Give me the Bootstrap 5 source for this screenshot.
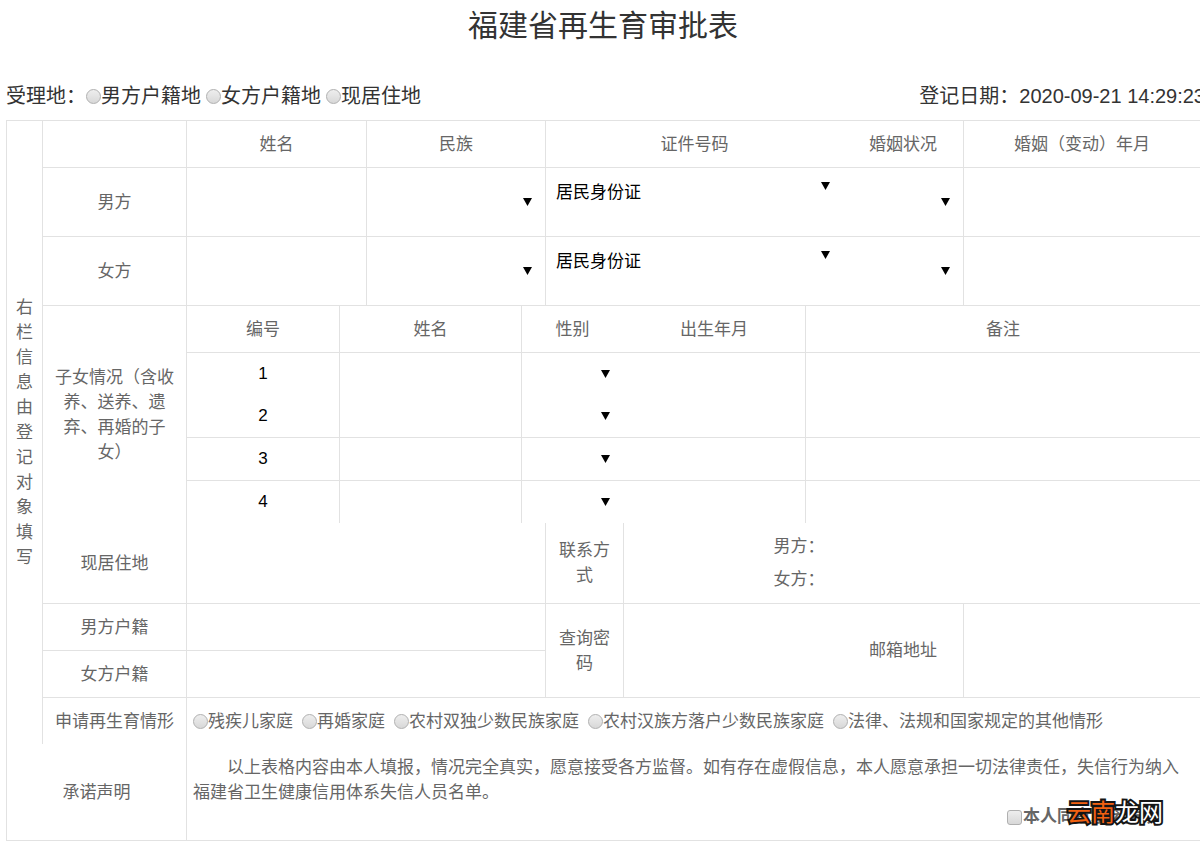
<!DOCTYPE html>
<html lang="zh-CN">
<head>
<meta charset="utf-8">
<meta name="viewport" content="width=device-width, initial-scale=1">
<title>福建省再生育审批表</title>
<link rel="stylesheet" href="https://cdn.jsdelivr.net/npm/bootstrap@5.3.0/dist/css/bootstrap.min.css">
<script src="https://cdn.jsdelivr.net/npm/bootstrap@5.3.0/dist/js/bootstrap.bundle.min.js"></script>
<style>
  body { font-family: "Liberation Sans", "Noto Sans CJK SC", sans-serif; color: #333; background: #fff; }
  .form-page { padding-left: 6px; overflow-x: hidden; }
  .form-title { font-size: 30px; line-height: 36px; padding: 8px 0 0; margin: 0 0 38px; font-weight: 400; }
  .form-meta { font-size: 20px; line-height: 28px; margin-bottom: 10px; white-space: nowrap; }
  .form-date { margin-right: -5px; }

  .approval { table-layout: fixed; width: 100%; border-collapse: separate; border-spacing: 0; border-bottom: 1px solid #e2e2e2;
    font-size: 17px; line-height: 25px; color: #666; }
  .approval th, .approval td { border: 0 solid #e2e2e2; border-width: 1px 0 0 1px; padding: 0 6px; font-weight: 400; text-align: center; vertical-align: middle; }
  .approval .open-top { border-top-width: 0; }
  .approval .open-left { border-left-width: 0; }
  .approval td.text-cell { text-align: left; }
  .approval th.children-label { padding: 0 12px; }
  .row-head { height: 47px; }
  .row-person { height: 69px; }
  .row-child { height: 43px; }
  .row-child-first { height: 42px; }
  .row-home { height: 80px; }
  .row-promise { height: 96px; }

  .field, .picker { display: block; width: 100%; height: 30px; border: 0; padding: 0; background: transparent; color: #000; font-size: 17px; outline-offset: 2px; }
  .field { text-align: center; }
  .picker { appearance: none; padding: 0 24px 0 4px; line-height: 30px;
    background: url("data:image/svg+xml,%3Csvg xmlns='http://www.w3.org/2000/svg' viewBox='0 0 9 8'%3E%3Cpath d='M0 0h9L4.5 8z'/%3E%3C/svg%3E") no-repeat right 7px center / 9px 8px; }
  .picker-id { height: 40px; padding-top: 8px; background-position: right 7px top 13px; }
  .id-field { height: 26px; }
  .contact-field { width: 226px; height: 25px; }

  .choice { display: inline-flex; align-items: center; margin-right: 5px; }
  .reasons .choice { margin-right: 9px; }
  .choice input, .agree input { appearance: none; flex: none; width: 15px; height: 15px; margin: 0; border: 1px solid #b0b0b0; border-radius: 50%;
    background: linear-gradient(#eee, #d8d8d8); }
  .agree input { margin-right: 1px; border-radius: 3px; }
  .choice input:checked, .agree input:checked { background: #555; }
  .agree { position: relative; padding-right: 35px; font-weight: 700; line-height: 24px; }
  .site-mark { position: absolute; right: 31px; bottom: 0; font-size: 24px; line-height: 32px; font-weight: 400; color: #fff;
    -webkit-text-stroke: 4px #151515; paint-order: stroke fill; white-space: nowrap; }
  .site-mark span { color: #f26111; }
</style>
</head>
<body>
<form class="form-page">
  <h1 class="form-title text-center">福建省再生育审批表</h1>
  <div class="form-meta d-flex justify-content-between">
    <div role="radiogroup" aria-label="受理地" class="d-flex">
      <span>受理地：</span>
      <label class="choice"><input type="radio" name="place">男方户籍地</label>
      <label class="choice"><input type="radio" name="place">女方户籍地</label>
      <label class="choice"><input type="radio" name="place">现居住地</label>
    </div>
    <div class="form-date">登记日期：2020-09-21 14:29:23</div>
  </div>

  <table class="approval">
    <colgroup>
      <col style="width:36px"><col style="width:144px"><col style="width:153px"><col style="width:27px"><col style="width:155px"><col style="width:24px"><col style="width:78px"><col style="width:182px"><col style="width:38px"><col style="width:120px"><col style="width:237px">
    </colgroup>
    <tbody>
      <tr class="row-head">
        <th rowspan="12" scope="rowgroup">右栏信息由登记对象填写</th>
        <td></td>
        <th colspan="2" scope="col">姓名</th>
        <th colspan="2" scope="col">民族</th>
        <th colspan="3" scope="col">证件号码</th>
        <th class="open-left" scope="col">婚姻状况</th>
        <th scope="col">婚姻（变动）年月</th>
      </tr>
      <tr class="row-person">
        <th scope="row">男方</th>
        <td colspan="2"><input class="field" type="text" aria-label="男方姓名"></td>
        <td colspan="2"><select class="picker" aria-label="男方民族"><option></option><option>汉族</option></select></td>
        <td colspan="3">
          <select class="picker picker-id" aria-label="男方证件类型"><option>居民身份证</option></select>
          <input class="field id-field" type="text" aria-label="男方证件号码">
        </td>
        <td class="open-left"><select class="picker" aria-label="男方婚姻状况"><option></option><option>初婚</option></select></td>
        <td><input class="field" type="text" aria-label="男方婚姻变动年月"></td>
      </tr>
      <tr class="row-person">
        <th scope="row">女方</th>
        <td colspan="2"><input class="field" type="text" aria-label="女方姓名"></td>
        <td colspan="2"><select class="picker" aria-label="女方民族"><option></option><option>汉族</option></select></td>
        <td colspan="3">
          <select class="picker picker-id" aria-label="女方证件类型"><option>居民身份证</option></select>
          <input class="field id-field" type="text" aria-label="女方证件号码">
        </td>
        <td class="open-left"><select class="picker" aria-label="女方婚姻状况"><option></option><option>初婚</option></select></td>
        <td><input class="field" type="text" aria-label="女方婚姻变动年月"></td>
      </tr>
      <tr class="row-head">
        <th rowspan="5" class="children-label" scope="rowgroup">子女情况（含收养、送养、遗弃、再婚的子女）</th>
        <th scope="col">编号</th>
        <th colspan="2" scope="col">姓名</th>
        <th colspan="2" scope="col">性别</th>
        <th class="open-left" scope="col">出生年月</th>
        <th colspan="3" scope="col">备注</th>
      </tr>
      <tr class="row-child-first">
        <td><input class="field" type="text" value="1" aria-label="编号"></td>
        <td colspan="2"><input class="field" type="text" aria-label="子女1姓名"></td>
        <td colspan="2"><select class="picker" aria-label="子女1性别"><option></option><option>男</option><option>女</option></select></td>
        <td class="open-left"><input class="field" type="text" aria-label="子女1出生年月"></td>
        <td colspan="3"><input class="field" type="text" aria-label="子女1备注"></td>
      </tr>
      <tr class="row-child">
        <td class="open-top"><input class="field" type="text" value="2" aria-label="编号"></td>
        <td colspan="2" class="open-top"><input class="field" type="text" aria-label="子女2姓名"></td>
        <td colspan="2" class="open-top"><select class="picker" aria-label="子女2性别"><option></option><option>男</option><option>女</option></select></td>
        <td class="open-top open-left"><input class="field" type="text" aria-label="子女2出生年月"></td>
        <td colspan="3" class="open-top"><input class="field" type="text" aria-label="子女2备注"></td>
      </tr>
      <tr class="row-child">
        <td><input class="field" type="text" value="3" aria-label="编号"></td>
        <td colspan="2"><input class="field" type="text" aria-label="子女3姓名"></td>
        <td colspan="2"><select class="picker" aria-label="子女3性别"><option></option><option>男</option><option>女</option></select></td>
        <td class="open-left"><input class="field" type="text" aria-label="子女3出生年月"></td>
        <td colspan="3"><input class="field" type="text" aria-label="子女3备注"></td>
      </tr>
      <tr class="row-child">
        <td><input class="field" type="text" value="4" aria-label="编号"></td>
        <td colspan="2"><input class="field" type="text" aria-label="子女4姓名"></td>
        <td colspan="2"><select class="picker" aria-label="子女4性别"><option></option><option>男</option><option>女</option></select></td>
        <td class="open-left"><input class="field" type="text" aria-label="子女4出生年月"></td>
        <td colspan="3"><input class="field" type="text" aria-label="子女4备注"></td>
      </tr>
      <tr class="row-home">
        <th class="open-top" scope="row">现居住地</th>
        <td colspan="4" class="open-top"><input class="field" type="text" aria-label="现居住地"></td>
        <th class="open-top" scope="row">联系方式</th>
        <td colspan="4" class="open-top">
          <div class="d-flex flex-column align-items-center gap-2">
            <label class="d-flex">男方：<input class="field contact-field" type="tel"></label>
            <label class="d-flex">女方：<input class="field contact-field" type="tel"></label>
          </div>
        </td>
      </tr>
      <tr class="row-head">
        <th scope="row">男方户籍</th>
        <td colspan="4"><input class="field" type="text" aria-label="男方户籍"></td>
        <th rowspan="2" scope="row">查询密码</th>
        <td colspan="2" rowspan="2"><input class="field" type="password" aria-label="查询密码"></td>
        <th rowspan="2" class="open-left" scope="row">邮箱地址</th>
        <td rowspan="2"><input class="field" type="email" aria-label="邮箱地址"></td>
      </tr>
      <tr class="row-head">
        <th scope="row">女方户籍</th>
        <td colspan="4"><input class="field" type="text" aria-label="女方户籍"></td>
      </tr>
      <tr class="row-head">
        <th class="px-0" scope="row">申请再生育情形</th>
        <td colspan="9" class="text-cell text-nowrap">
          <div role="radiogroup" aria-label="申请再生育情形" class="reasons d-flex">
            <label class="choice"><input type="radio" name="reason">残疾儿家庭</label>
            <label class="choice"><input type="radio" name="reason">再婚家庭</label>
            <label class="choice"><input type="radio" name="reason">农村双独少数民族家庭</label>
            <label class="choice"><input type="radio" name="reason">农村汉族方落户少数民族家庭</label>
            <label class="choice"><input type="radio" name="reason">法律、法规和国家规定的其他情形</label>
          </div>
        </td>
      </tr>
      <tr class="row-promise">
        <th colspan="2" class="open-top" scope="row">承诺声明</th>
        <td colspan="9" class="text-cell open-top">
          <p class="m-0">　　以上表格内容由本人填报，情况完全真实，愿意接受各方监督。如有存在虚假信息，本人愿意承担一切法律责任，失信行为纳入福建省卫生健康信用体系失信人员名单。</p>
          <div class="agree d-flex justify-content-end">
            <label class="d-flex align-items-center"><input type="checkbox">本人同意承诺声明</label>
            <span class="site-mark"><span>云南</span>龙网</span>
          </div>
        </td>
      </tr>
    </tbody>
  </table>
</form>
</body>
</html>
